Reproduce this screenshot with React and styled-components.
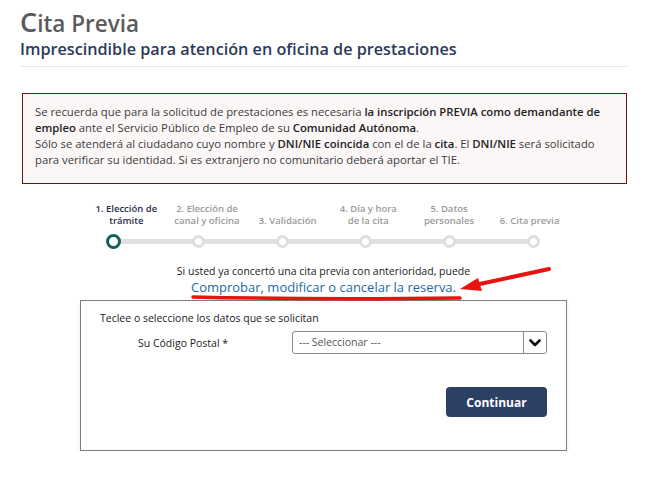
import React from "react";
import styled, { createGlobalStyle } from "styled-components";

const GlobalStyle = createGlobalStyle`
  html, body {
    margin: 0;
    padding: 0;
    background: #fff;
  }
  body {
    font-family: "Open Sans", "Noto Sans", sans-serif;
    color: #333;
  }
`;

const Page = styled.div`
  width: 607px;
  padding: 8px 31px 0 20px;
`;

const Title = styled.h1`
  margin: 0;
  font-size: 22.5px;
  line-height: 28px;
  font-weight: 600;
  color: #5b5b5b;

  &::first-letter {
    font-size: 27px;
  }
`;

const Subtitle = styled.h2`
  margin: 0;
  font-size: 16.2px;
  line-height: 22px;
  font-weight: 600;
  color: #2b3a5a;
`;

const Divider = styled.hr`
  margin: 6px 0 0;
  border: 0;
  border-top: 1px solid #e6e6e6;
`;

const Alert = styled.div`
  margin: 26px 0 0 2px;
  padding: 10px 12px 15px 12px;
  border: 1px solid #6d1414;
  background: #fcf7f7;
  font-size: 11.3px;
  line-height: 16px;
  color: #3a3a3a;

  b {
    font-weight: 600;
    color: #222;
  }
`;

const Stepper = styled.div`
  margin: 19px 57px 0 66px;
`;

const StepLabels = styled.div`
  display: grid;
  grid-template-columns: repeat(6, 1fr);
  align-items: end;
`;

const StepLabel = styled.div`
  text-align: center;
  font-size: 9.5px;
  line-height: 12px;
  font-weight: 600;
  color: ${(p) => (p.$active ? "#1f2d4a" : "#9a9a9a")};
`;

const Track = styled.div`
  position: relative;
  display: flex;
  justify-content: space-between;
  align-items: center;
  margin: 6px 30px 0 20px;
  height: 16px;

  &::before {
    content: "";
    position: absolute;
    left: 6px;
    right: 6px;
    top: 6px;
    height: 5px;
    background: #e0e0e0;
  }
`;

const Dot = styled.span`
  position: relative;
  box-sizing: border-box;
  width: ${(p) => (p.$active ? "15px" : "13px")};
  height: ${(p) => (p.$active ? "15px" : "13px")};
  border-radius: 50%;
  background: #fff;
  border: ${(p) => (p.$active ? "3.5px solid #17615d" : "3px solid #dedede")};
`;

const Notice = styled.div`
  position: relative;
  margin-top: 15px;
  text-align: center;
`;

const NoticeText = styled.div`
  font-size: 10.5px;
  line-height: 15px;
  color: #222;
`;

const Link = styled.a`
  display: block;
  font-size: 13px;
  line-height: 16px;
  color: #1d6aa5;
  text-decoration: none;
  cursor: pointer;
`;

const Annotation = styled.svg`
  position: absolute;
  left: 0;
  top: 0;
  pointer-events: none;
`;

const FormBox = styled.div`
  margin: 5px 60px 0 60px;
  height: 151px;
  box-sizing: border-box;
  border: 1px solid #7d7d7d;
  box-shadow: 0 4px 6px rgba(0, 0, 0, 0.08);
  padding: 10px 19px 0 19px;
`;

const FormIntro = styled.div`
  font-size: 10.5px;
  line-height: 15px;
  color: #222;
`;

const FieldRow = styled.div`
  display: grid;
  grid-template-columns: 192px 1fr;
  align-items: center;
  margin-top: 5px;
`;

const FieldLabel = styled.label`
  padding-left: 38px;
  font-size: 10.5px;
  color: #222;
`;

const SelectBox = styled.div`
  display: flex;
  height: 23px;
  box-sizing: border-box;
  border: 1px solid #8a8a8a;
  border-radius: 3px;
  overflow: hidden;
`;

const SelectValue = styled.div`
  flex: 1;
  padding-left: 6px;
  font-size: 10.5px;
  line-height: 21px;
  color: #555;
`;

const SelectButton = styled.div`
  width: 22px;
  display: flex;
  align-items: center;
  justify-content: center;
  border-left: 1px solid #8a8a8a;
`;

const Actions = styled.div`
  display: flex;
  justify-content: flex-end;
  margin-top: 33px;
`;

const PrimaryButton = styled.button`
  width: 101px;
  height: 30px;
  border: 0;
  border-radius: 4px;
  background: #2c4064;
  color: #fff;
  font-family: inherit;
  font-size: 12px;
  font-weight: 700;
  cursor: pointer;
`;

const steps = [
  ["1. Elección de", "trámite"],
  ["2. Elección de", "canal y oficina"],
  ["3. Validación"],
  ["4. Día y hora", "de la cita"],
  ["5. Datos", "personales"],
  ["6. Cita previa"],
];

export default function App() {
  return (
    <Page>
      <GlobalStyle />
      <Title>Cita Previa</Title>
      <Subtitle>Imprescindible para atención en oficina de prestaciones</Subtitle>
      <Divider />

      <Alert>
        Se recuerda que para la solicitud de prestaciones es necesaria{" "}
        <b>la inscripción PREVIA como demandante de empleo</b> ante el Servicio
        Público de Empleo de su <b>Comunidad Autónoma</b>.
        <br />
        Sólo se atenderá al ciudadano cuyo nombre y <b>DNI/NIE coincida</b> con
        el de la <b>cita</b>. El <b>DNI/NIE</b> será solicitado para verificar su
        identidad. Si es extranjero no comunitario deberá aportar el TIE.
      </Alert>

      <Stepper>
        <StepLabels>
          {steps.map((lines, i) => (
            <StepLabel key={i} $active={i === 0}>
              {lines.map((l, j) => (
                <div key={j}>{l}</div>
              ))}
            </StepLabel>
          ))}
        </StepLabels>
        <Track>
          {steps.map((_, i) => (
            <Dot key={i} $active={i === 0} />
          ))}
        </Track>
      </Stepper>

      <Notice>
        <NoticeText>
          Si usted ya concertó una cita previa con anterioridad, puede
        </NoticeText>
        <Link>Comprobar, modificar o cancelar la reserva.</Link>
        <Annotation width="607" height="40" viewBox="0 0 607 40">
          <path
            d="M173 33 C 260 35, 360 35, 440 34"
            stroke="#e8120f"
            strokeWidth="3.5"
            fill="none"
            strokeLinecap="round"
          />
          <path
            d="M529 5 L 455 21"
            stroke="#e8120f"
            strokeWidth="4"
            fill="none"
            strokeLinecap="round"
          />
          <polygon points="440,25 458,14 462,27" fill="#e8120f" />
        </Annotation>
      </Notice>

      <FormBox>
        <FormIntro>Teclee o seleccione los datos que se solicitan</FormIntro>
        <FieldRow>
          <FieldLabel>Su Código Postal *</FieldLabel>
          <SelectBox>
            <SelectValue>--- Seleccionar ---</SelectValue>
            <SelectButton>
              <svg width="12" height="8" viewBox="0 0 12 8">
                <polyline
                  points="1.5,1.5 6,6 10.5,1.5"
                  fill="none"
                  stroke="#111"
                  strokeWidth="2.6"
                  strokeLinecap="round"
                  strokeLinejoin="round"
                />
              </svg>
            </SelectButton>
          </SelectBox>
        </FieldRow>
        <Actions>
          <PrimaryButton>Continuar</PrimaryButton>
        </Actions>
      </FormBox>
    </Page>
  );
}
